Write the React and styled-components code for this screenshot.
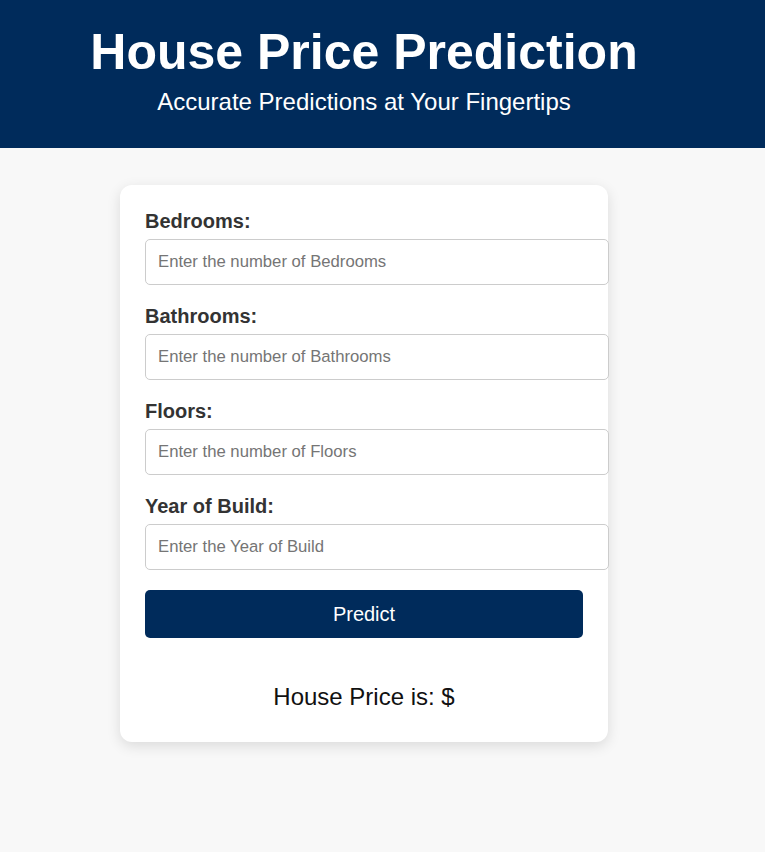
import React from 'react';
import styled, { createGlobalStyle } from 'styled-components';

const GlobalStyle = createGlobalStyle`
  html, body {
    margin: 0;
    padding: 0;
    background: #f8f8f8;
    font-family: "Liberation Sans", Arial, sans-serif;
  }
  #root {
    min-height: 100vh;
  }
`;

const fields = [
  { id: 'bedrooms', label: 'Bedrooms:', placeholder: 'Enter the number of Bedrooms' },
  { id: 'bathrooms', label: 'Bathrooms:', placeholder: 'Enter the number of Bathrooms' },
  { id: 'floors', label: 'Floors:', placeholder: 'Enter the number of Floors' },
  { id: 'year', label: 'Year of Build:', placeholder: 'Enter the Year of Build' },
];

const S = {
  Header: styled.header`
    background: #002b5b;
    color: #fff;
    height: 148px;
    box-sizing: border-box;
    padding-top: 23px;
  `,
  Inner: styled.div`
    width: 728px;
    text-align: center;
  `,
  Title: styled.h1`
    margin: 0 0 7px;
    font-size: 50px;
    font-weight: 700;
  `,
  Subtitle: styled.p`
    margin: 0;
    font-size: 24px;
  `,
  Main: styled.main`
    width: 728px;
    display: flex;
    justify-content: center;
    padding-top: 37px;
  `,
  Card: styled.form`
    width: 488px;
    box-sizing: border-box;
    background: #fff;
    border-radius: 12px;
    padding: 25px;
    box-shadow: 0 4px 14px rgba(0, 0, 0, 0.12);
  `,
  Group: styled.div`
    margin-bottom: 20px;
  `,
  Label: styled.label`
    display: block;
    margin-bottom: 6px;
    font-size: 20px;
    line-height: 23px;
    font-weight: 700;
    color: #333;
  `,
  Input: styled.input`
    display: block;
    width: 100%;
    margin: 0;
    padding: 12px;
    border: 1px solid #ccc;
    border-radius: 5px;
    font-family: inherit;
    font-size: 16.7px;
    line-height: 20px;
    background: #fff;
    &::placeholder {
      color: #757575;
    }
  `,
  Button: styled.button`
    display: block;
    width: 100%;
    margin-top: 20px;
    padding: 12px;
    border: none;
    border-radius: 5px;
    background: #002b5b;
    color: #fff;
    font-family: inherit;
    font-size: 20px;
    line-height: 24px;
    cursor: pointer;
  `,
  Result: styled.h2`
    margin: 45px 0 6px;
    text-align: center;
    font-size: 24px;
    font-weight: 400;
    color: #111;
  `,
};

const App = () => {
  return (
    <>
      <GlobalStyle />
      <S.Header>
        <S.Inner>
          <S.Title>House Price Prediction</S.Title>
          <S.Subtitle>Accurate Predictions at Your Fingertips</S.Subtitle>
        </S.Inner>
      </S.Header>
      <S.Main>
        <S.Card onSubmit={e => e.preventDefault()}>
          {fields.map(f => (
            <S.Group key={f.id}>
              <S.Label htmlFor={f.id}>{f.label}</S.Label>
              <S.Input id={f.id} type="text" placeholder={f.placeholder} />
            </S.Group>
          ))}
          <S.Button type="submit">Predict</S.Button>
          <S.Result>House Price is: $</S.Result>
        </S.Card>
      </S.Main>
    </>
  );
};

export default App;
